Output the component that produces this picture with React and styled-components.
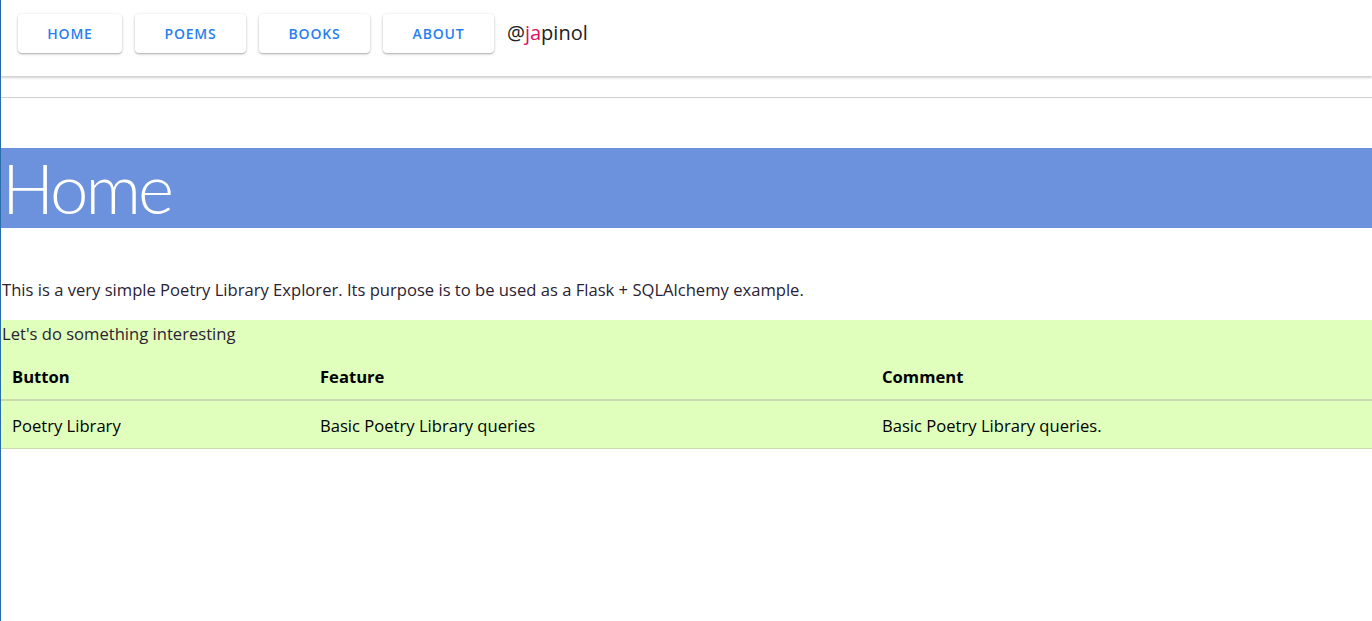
import React from 'react';
import styled, { createGlobalStyle } from 'styled-components';

const GlobalStyle = createGlobalStyle`
  html, body {
    margin: 0;
    padding: 0;
    background: #fff;
  }
  body {
    font-family: 'Open Sans', 'Noto Sans', sans-serif;
    color: #2b2233;
  }
`;

const Page = styled.div`
  min-height: 621px;
  border-left: 1px solid #2a6ca8;
  box-sizing: border-box;
`;

const AppBar = styled.header`
  height: 76px;
  display: flex;
  align-items: flex-start;
  padding: 14px 0 0 17px;
  box-sizing: border-box;
  gap: 13px;
  background: #fff;
  box-shadow: 0 2px 2px rgba(0, 0, 0, 0.18);
`;

const NavButton = styled.button`
  height: 39px;
  padding: 0 28px;
  border: none;
  border-radius: 4px;
  background: #fff;
  color: #2a7ff0;
  font-family: 'Open Sans', sans-serif;
  font-size: 14px;
  font-weight: 600;
  letter-spacing: 0.8px;
  text-transform: uppercase;
  cursor: pointer;
  box-shadow: 0 1px 3px rgba(0, 0, 0, 0.25), 0 1px 1px rgba(0, 0, 0, 0.12);
  min-width: ${({ wide }) => (wide ? '111px' : '104px')};
`;

const Handle = styled.span`
  margin: 5px 0 0 0;
  font-family: 'Open Sans', sans-serif;
  font-size: 20px;
  color: #222;
`;

const Accent = styled.span`
  color: #e0115f;
`;

const Rule = styled.hr`
  margin: 21px 0 0;
  border: none;
  border-top: 1px solid #cfcfcf;
`;

const Banner = styled.div`
  margin-top: 50px;
  height: 80px;
  background: #6c91dd;
  display: flex;
  align-items: center;
`;

const Title = styled.h1`
  margin: 0 0 0 1px;
  font-family: 'Lato', 'Open Sans', sans-serif;
  font-weight: 300;
  font-size: 69px;
  letter-spacing: -3px;
  line-height: 80px;
  color: #fff;
`;

const Intro = styled.p`
  margin: 51px 0 0 1px;
  font-size: 16.6px;
  line-height: 22px;
`;

const Panel = styled.section`
  margin-top: 19px;
  background: #e0ffbc;
  padding-top: 2px;
`;

const PanelTitle = styled.div`
  font-size: 16.6px;
  line-height: 24px;
  padding-left: 1px;
`;

const Table = styled.table`
  width: 100%;
  border-collapse: collapse;
  table-layout: fixed;
`;

const Th = styled.th`
  text-align: left;
  font-weight: 700;
  color: #000;
  font-size: 16.6px;
  padding: 18px 11px 11px;
  height: 24px;
  border-bottom: 2px solid #c8dcae;
  width: ${({ w }) => w || 'auto'};
`;

const Td = styled.td`
  font-size: 16.6px;
  color: #000;
  padding: 12px 11px 11px;
  height: 24px;
  border-bottom: 1px solid #c8dcae;
`;

const rows = [
  { button: 'Poetry Library', feature: 'Basic Poetry Library queries', comment: 'Basic Poetry Library queries.' },
];

export default function App() {
  return (
    <Page>
      <GlobalStyle />
      <AppBar>
        <NavButton>Home</NavButton>
        <NavButton wide>Poems</NavButton>
        <NavButton wide>Books</NavButton>
        <NavButton wide>About</NavButton>
        <Handle>@<Accent>ja</Accent>pinol</Handle>
      </AppBar>
      <Rule />
      <Banner>
        <Title>Home</Title>
      </Banner>
      <Intro>
        This is a very simple Poetry Library Explorer. Its purpose is to be used as a Flask + SQLAlchemy example.
      </Intro>
      <Panel>
        <PanelTitle>Let's do something interesting</PanelTitle>
        <Table>
          <thead>
            <tr>
              <Th w="286px">Button</Th>
              <Th w="540px">Feature</Th>
              <Th>Comment</Th>
            </tr>
          </thead>
          <tbody>
            {rows.map((r) => (
              <tr key={r.button}>
                <Td>{r.button}</Td>
                <Td>{r.feature}</Td>
                <Td>{r.comment}</Td>
              </tr>
            ))}
          </tbody>
        </Table>
      </Panel>
    </Page>
  );
}
